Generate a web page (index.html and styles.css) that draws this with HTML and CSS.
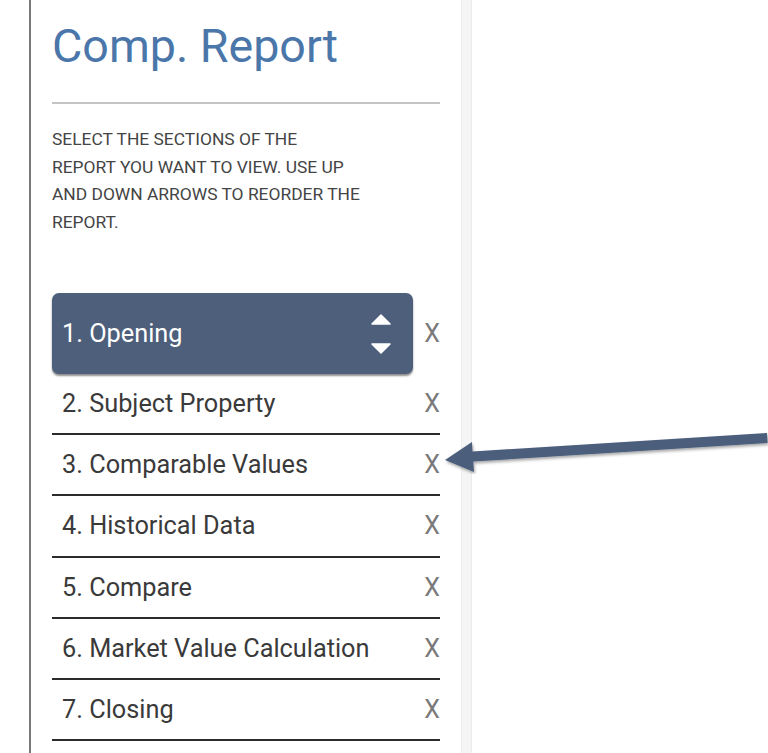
FILE: index.html
```html
<!DOCTYPE html>
<html lang="en">
<head>
  <meta charset="UTF-8" />
  <title>Comp. Report</title>
  <link rel="stylesheet" href="styles.css">
</head>
<body>
  <div class="page">
    <div class="sidebar">
      <h1 class="title">Comp. Report</h1>
      <hr class="divider" />
      <p class="hint">Select the sections of the<br>report you want to view. Use up<br>and down arrows to reorder the<br>report.</p>

      <ul class="sections">
        <li class="section active">
          <span class="label">1. Opening
            <svg class="reorder" viewBox="0 0 20 42" xmlns="http://www.w3.org/2000/svg" aria-label="Reorder" role="button">
              <path d="M10 2 L19 11 L1 11 Z" fill="white" stroke="white" stroke-width="1.5" stroke-linejoin="round"/>
              <path d="M1 31 L19 31 L10 40 Z" fill="white" stroke="white" stroke-width="1.5" stroke-linejoin="round"/>
            </svg>
          </span>
          <span class="remove">X</span>
        </li>
        <li class="section"><span class="label">2. Subject Property</span><span class="remove">X</span></li>
        <li class="section"><span class="label">3. Comparable Values</span><span class="remove">X</span></li>
        <li class="section"><span class="label">4. Historical Data</span><span class="remove">X</span></li>
        <li class="section"><span class="label">5. Compare</span><span class="remove">X</span></li>
        <li class="section"><span class="label">6. Market Value Calculation</span><span class="remove">X</span></li>
        <li class="section"><span class="label">7. Closing</span><span class="remove">X</span></li>
      </ul>
    </div>
    <div class="gutter"></div>
    <div class="canvas"></div>
  </div>

  <!-- callout pointing at the remove button -->
  <svg class="callout" viewBox="0 0 330 44" xmlns="http://www.w3.org/2000/svg">
    <defs>
      <filter id="shadow" x="-10%" y="-50%" width="120%" height="200%">
        <feDropShadow dx="1" dy="2" stdDeviation="1.5" flood-color="#000" flood-opacity="0.35"/>
      </filter>
    </defs>
    <path d="M2 30 L29 12 L29.5 21.5 L324 3 L324.6 13 L30.3 31.5 L31 42 Z" fill="#4b5e7c" filter="url(#shadow)"/>
  </svg>
</body>
</html>
```

FILE: styles.css
```css
* { box-sizing: border-box; }
body {
  margin: 0;
  background: #fff;
  font-family: Roboto, 'Liberation Sans', sans-serif;
  color: #3a3a3a;
}
.page {
  display: flex;
  height: 753px;
  overflow: hidden;
}
.sidebar {
  margin-left: 29px;
  border-left: 2px solid #7a7a7a;
  padding: 0 21px 0 21px;
  width: 432px;
}
.title {
  margin: 18px 0 0;
  font-size: 46.6px;
  font-weight: 400;
  line-height: 56px;
  color: #4a76aa;
}
.divider {
  margin: 28px 0 0;
  border: none;
  border-top: 2px solid #c4c4c4;
}
.hint {
  margin: 22px 0 0;
  font-size: 17.4px;
  line-height: 27.5px;
  text-transform: uppercase;
  color: #444;
}
.sections {
  list-style: none;
  margin: 57px 0 0;
  padding: 0;
}
.section {
  display: flex;
  align-items: center;
  height: 61.2px;
  border-bottom: 2px solid #2b2b2b;
  font-size: 25.3px;
}
.section .label {
  flex: 1;
  padding-left: 10px;
}
.section .remove {
  width: 27px;
  text-align: right;
  color: #7a7a7a;
  font-size: 25px;
}
.section.active {
  height: 81px;
  border-bottom: none;
}
.section.active .label {
  display: flex;
  align-items: center;
  justify-content: space-between;
  height: 81px;
  padding-right: 22px;
  background: #4d5f7b;
  color: #fff;
  border-radius: 7px;
  box-shadow: 0 2px 2px rgba(0, 0, 0, 0.45);
}
.reorder {
  width: 20px;
  height: 42px;
}
.gutter {
  width: 11px;
  background: #f5f5f5;
  border-left: 1px solid #efefef;
  border-right: 1px solid #ececec;
}
.canvas {
  flex: 1;
}
.callout {
  position: absolute;
  left: 443px;
  top: 430px;
  width: 330px;
  height: 44px;
}
```
